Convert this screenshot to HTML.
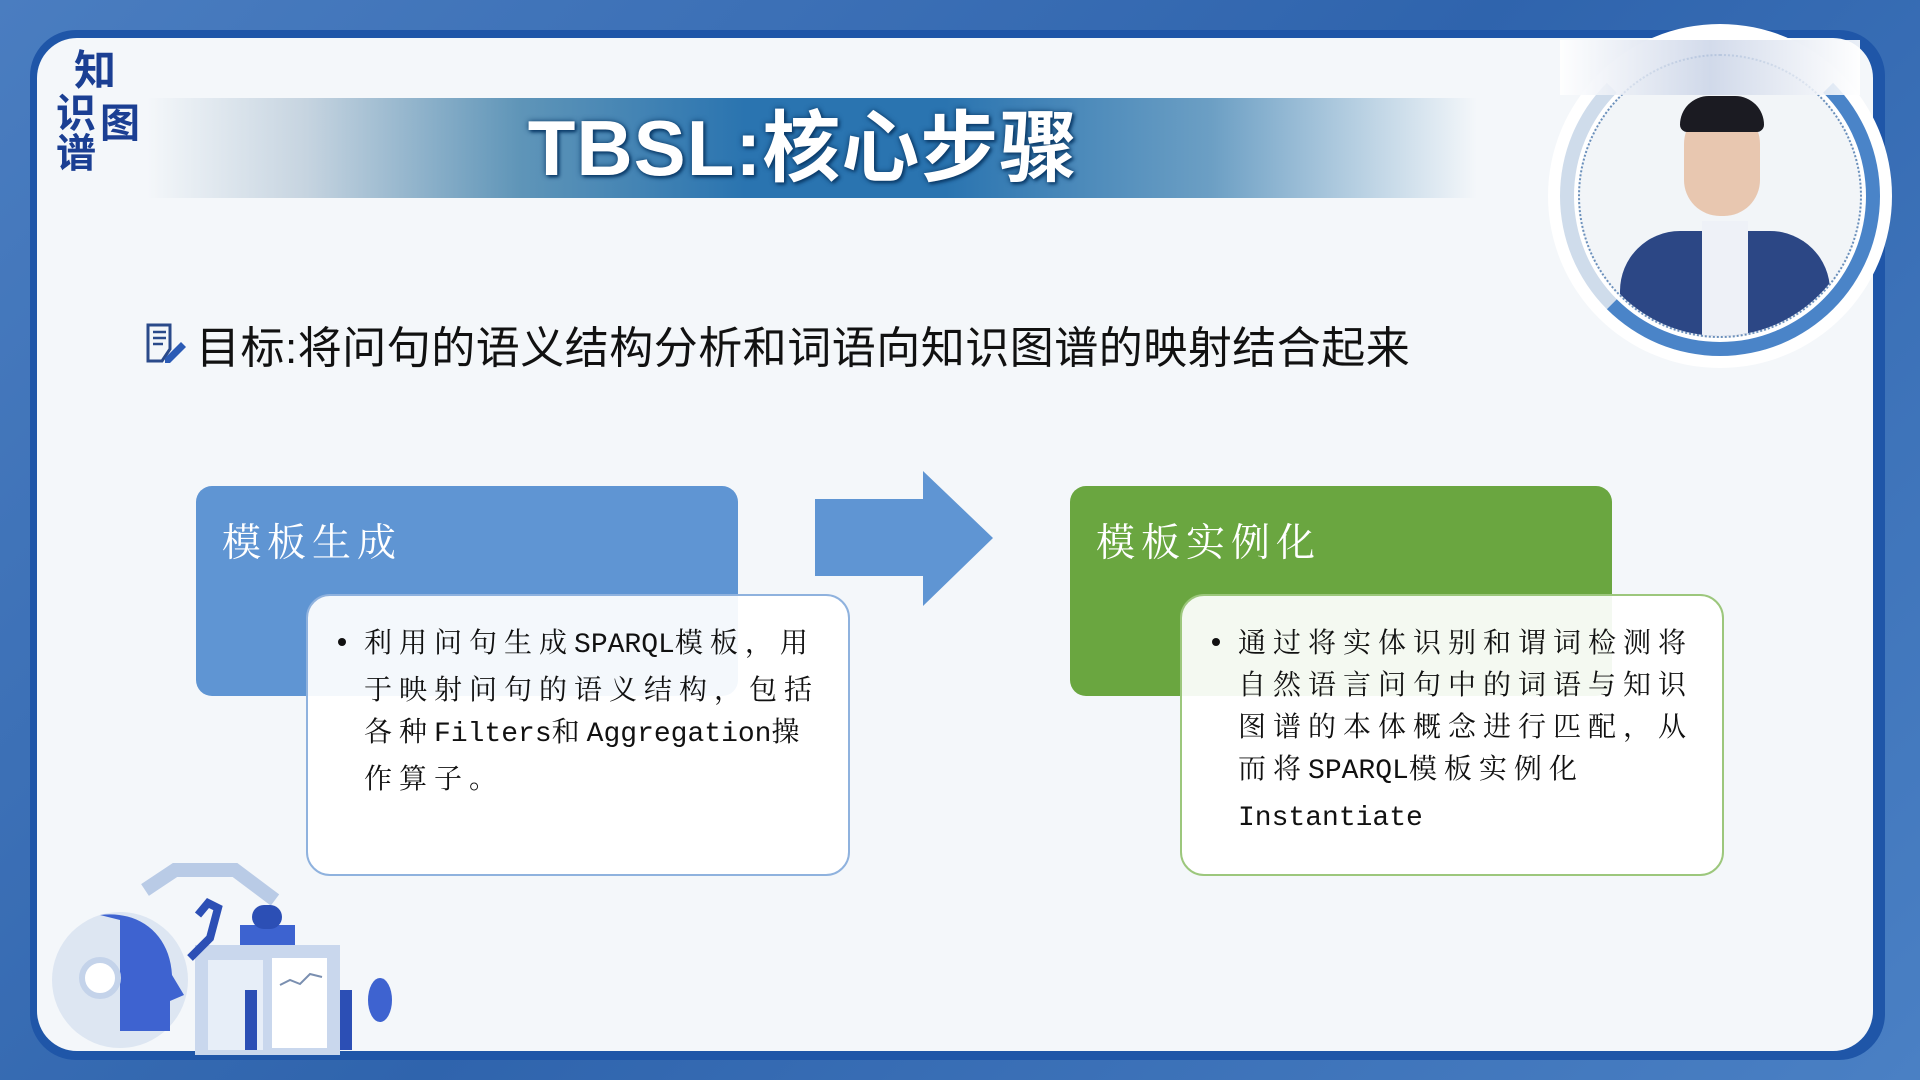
<!DOCTYPE html>
<html><head><meta charset="utf-8">
<style>
*{margin:0;padding:0;box-sizing:border-box}
body{width:1920px;height:1080px;overflow:hidden;background:#3d6fb3;position:relative;font-family:"Liberation Sans","Noto Sans CJK SC",sans-serif}
.bg{position:absolute;inset:0;background:linear-gradient(135deg,#4a7dc0,#2f64ad 50%,#4a80c4)}
.frame{position:absolute;left:30px;top:30px;width:1855px;height:1030px;border-radius:46px;background:#1f56a8}
.panel{position:absolute;left:37px;top:38px;width:1836px;height:1013px;border-radius:40px;background:#f4f7fa}
.banner{position:absolute;left:147px;top:98px;width:1330px;height:100px;background:linear-gradient(90deg,rgba(240,244,248,0) 0%,#c6d4e0 12%,#5f95b8 28%,#2a74b0 45%,#2a74b0 60%,#6c9fc4 80%,rgba(240,244,248,0) 100%)}
.title{position:absolute;left:0;width:1606px;top:100px;text-align:center;font-size:78px;line-height:96px;font-weight:bold;color:#fff;letter-spacing:1px;text-shadow:0 0 6px #0c3c6a,2px 2px 3px #0c3c6a}
.logo{position:absolute;color:#1b3f93;font-weight:bold;line-height:1;font-family:"Liberation Sans","Noto Sans CJK SC",sans-serif}
.goal{position:absolute;left:196px;top:312px;font-size:44px;letter-spacing:0.5px;color:#111;font-family:"Liberation Sans","Noto Sans CJK SC",sans-serif}
.hbox{position:absolute;top:486px;width:542px;height:210px;border-radius:16px}
.htext{position:absolute;left:26px;top:26px;font-size:39px;color:#fff;letter-spacing:6px;font-family:"Noto Serif CJK SC",serif}
.wbox{position:absolute;top:594px;width:544px;height:282px;border-radius:24px;background:rgba(255,255,255,.93);border:2px solid}
.wt{position:absolute;left:56px;top:24px;font-size:28px;line-height:42px;letter-spacing:7px;color:#111;font-family:"Noto Serif CJK SC",serif;white-space:nowrap}
.wt .l{font-family:"Liberation Mono",monospace;letter-spacing:0;font-size:28px}
.dot{position:absolute;left:30px;top:42px;width:8px;height:8px;border-radius:50%;background:#111}
</style></head><body>
<div class="bg"></div>
<div class="frame"></div>
<div class="panel"></div>
<div class="banner"></div>
<div class="title">TBSL:核心步骤</div>
<div class="logo" style="left:74px;top:50px;font-size:42px">知</div>
<div class="logo" style="left:56px;top:94px;font-size:40px">识</div>
<div class="logo" style="left:56px;top:134px;font-size:40px">谱</div>
<div class="logo" style="left:100px;top:104px;font-size:40px">图</div>
<svg style="position:absolute;left:145px;top:322px" width="44" height="42" viewBox="0 0 44 42"><path d="M3 3h22v24l-8 12H3z" fill="none" stroke="#2a4a8a" stroke-width="3"/><path d="M8 10h13M8 16h13M8 22h10" stroke="#2a4a8a" stroke-width="2.5"/><path d="M20 36l16-16 5 5-16 16h-5z" fill="#2b5bb5"/></svg>
<div class="goal">目标:将问句的语义结构分析和词语向知识图谱的映射结合起来</div>

<div class="hbox" style="left:196px;background:#5f95d3"><div class="htext">模板生成</div></div>
<div class="wbox" style="left:306px;border-color:#8fb2de"><div class="dot"></div><div class="wt">利用问句生成<span class="l">SPARQL</span>模板，用<br>于映射问句的语义结构，包括<br>各种<span class="l">Filters</span>和<span class="l">Aggregation</span>操<br>作算子。</div></div>

<svg style="position:absolute;left:815px;top:471px" width="178" height="135" viewBox="0 0 178 135"><path d="M0 28h108V0l70 67-70 68v-30H0z" fill="#5f95d3"/></svg>

<div class="hbox" style="left:1070px;background:#6aa640"><div class="htext">模板实例化</div></div>
<div class="wbox" style="left:1180px;border-color:#9cc77c"><div class="dot"></div><div class="wt">通过将实体识别和谓词检测将<br>自然语言问句中的词语与知识<br>图谱的本体概念进行匹配，从<br>而将<span class="l">SPARQL</span>模板实例化<br><span class="l">Instantiate</span></div></div>

<!-- avatar -->
<div style="position:absolute;left:1548px;top:24px;width:344px;height:344px;border-radius:50%;background:#fff"></div>
<div style="position:absolute;left:1560px;top:36px;width:320px;height:320px;border-radius:50%;border:14px solid #4a84c8;border-top-color:#fff;border-left-color:#cfdceb"></div>
<div style="position:absolute;left:1578px;top:54px;width:284px;height:284px;border-radius:50%;background:#f2f5f8;overflow:hidden;border:2px dotted #6a8fbb">
<div style="position:absolute;left:104px;top:50px;width:76px;height:110px;border-radius:38px 38px 36px 36px;background:#e8c7b0"></div>
<div style="position:absolute;left:100px;top:40px;width:84px;height:36px;border-radius:40px 40px 10px 10px;background:#1b1b22"></div>
<div style="position:absolute;left:40px;top:175px;width:210px;height:140px;border-radius:60px 60px 0 0;background:#2c4785"></div>
<div style="position:absolute;left:122px;top:165px;width:46px;height:140px;background:#eef1f7"></div>
</div>
<div style="position:absolute;left:1560px;top:40px;width:300px;height:55px;background:linear-gradient(90deg,rgba(255,255,255,.9),rgba(200,210,230,.8),rgba(255,255,255,.9))"></div>

<!-- illustration -->
<svg style="position:absolute;left:40px;top:860px" width="380" height="195" viewBox="0 0 380 195">
<path d="M105 30l30-20h60l40 30" fill="none" stroke="#b9cbe6" stroke-width="14"/>
<circle cx="80" cy="120" r="68" fill="#dde6f2"/>
<path d="M60 55c40-5 70 20 72 60l12 20-14 6v30H80V60z" fill="#3e63d0"/>
<circle cx="60" cy="118" r="18" fill="#fff" stroke="#c4d3ea" stroke-width="6"/>
<rect x="200" y="65" width="55" height="20" fill="#3d63d0"/><rect x="212" y="45" width="30" height="24" rx="12" fill="#2c4fb5"/>
<rect x="155" y="85" width="145" height="115" fill="#c9d7ed"/>
<rect x="168" y="100" width="55" height="90" fill="#e7eef8"/><rect x="232" y="98" width="55" height="90" fill="#fff"/>
<path d="M240 125l10-5 10 4 10-10 12 3" stroke="#7a8fb0" fill="none" stroke-width="2"/>
<path d="M158 55l10-12 10 5-8 30-20 20" stroke="#2c4fb5" stroke-width="8" fill="none"/>
<rect x="205" y="130" width="12" height="60" fill="#2c4fb5"/><rect x="300" y="130" width="12" height="60" fill="#2c4fb5"/>
<ellipse cx="340" cy="140" rx="12" ry="22" fill="#3e63d0"/>
</svg>
</body></html>
